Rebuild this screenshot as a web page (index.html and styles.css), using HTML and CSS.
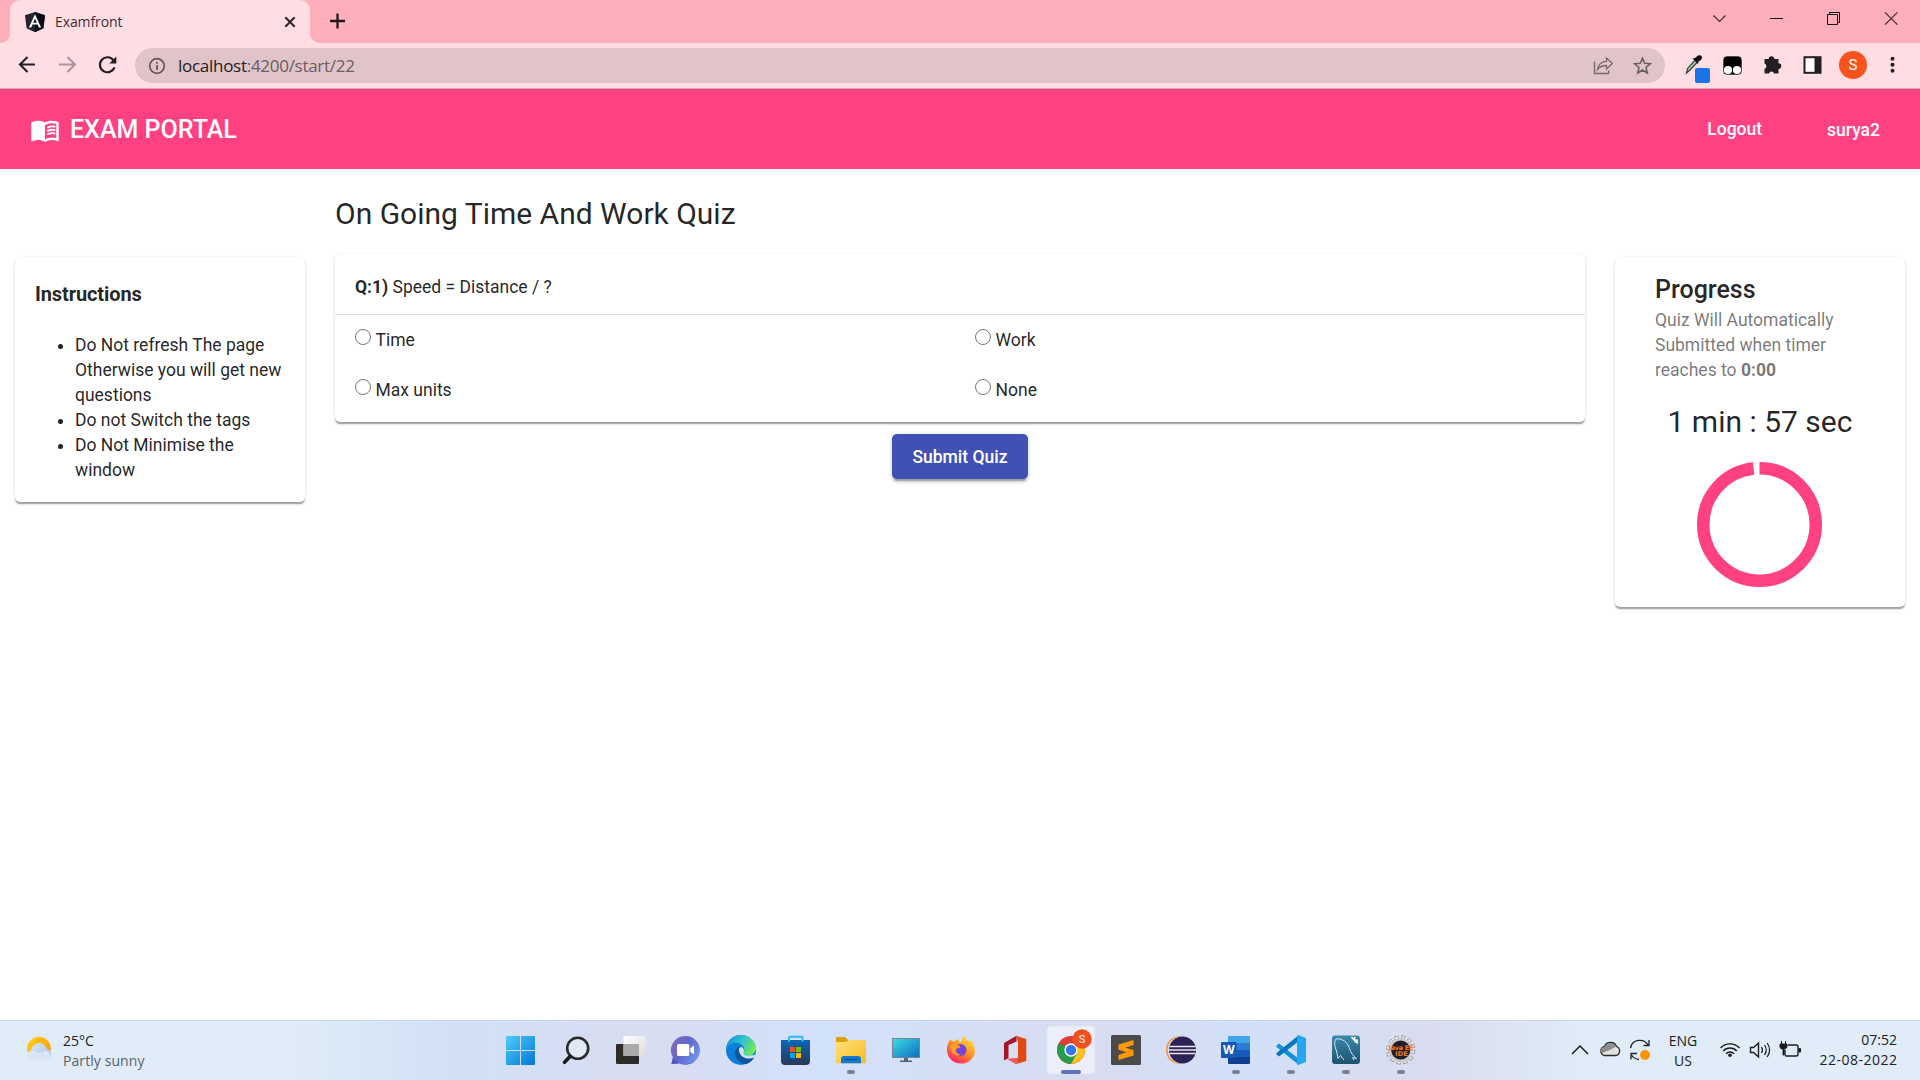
FILE: index.html
```html
<!DOCTYPE html>
<html lang="en">
<head>
<meta charset="utf-8">
<title>Examfront</title>
<link rel="stylesheet" href="styles.css">
</head>
<body>
<div class="screen">
  <div class="tabstrip">
    <span class="tab-foot tab-foot-left"></span>
    <div class="tab">
      <svg class="favicon" width="20" height="20" viewBox="0 0 20 20"><path d="M10 0 20 3.2 18.4 16.2 10 20.2 1.6 16.2 0 3.2Z" fill="#23242f"/><path d="M10 0 20 3.2 18.4 16.2 10 20.2Z" fill="#090b17"/><path d="M10 2.2 3.9 15.6H6.2L7.4 12.6H12.6L13.8 15.6H16.1ZM10 6.5 11.8 10.8H8.2Z" fill="#fff"/></svg>
      <span class="tab-title">Examfront</span>
      <svg class="tab-close" width="12" height="12" viewBox="0 0 12 12"><path d="M1.3 1.3 10.7 10.7M10.7 1.3 1.3 10.7" stroke="#2a2326" stroke-width="2"/></svg>
    </div>
    <span class="tab-foot tab-foot-right"></span>
    <svg class="tab-new" width="16" height="16" viewBox="0 0 16 16"><path d="M8.500 .5V15.500M1 8H16" stroke="#20191c" stroke-width="2.300"/></svg>
    <div class="window-buttons">
      <svg width="57" height="37" viewBox="0 0 57 37"><path d="M21.500 15.500 27.500 21.500 33.500 15.500" fill="none" stroke="#40282d" stroke-width="1.200"/></svg>
      <svg width="57" height="37" viewBox="0 0 57 37"><path d="M21 18.500H34" stroke="#111"/></svg>
      <svg width="57" height="37" viewBox="0 0 57 37"><path d="M21.500 14.500H31.500V24.500H21.500ZM23.500 14V12.500H33.500V22.500H32" fill="none" stroke="#111"/></svg>
      <svg width="57" height="37" viewBox="0 0 57 37"><path d="M22 12.300 34.400 24.700M34.400 12.300 22 24.700" stroke="#40282d" stroke-width="1.200"/></svg>
    </div>
  </div>

  <div class="toolbar">
    <svg width="40" height="44" viewBox="0 0 40 44"><path d="M28 21.500H13.500M20.500 14 13 21.500 20.500 29" fill="none" stroke="#221d20" stroke-width="2.100"/></svg>
    <svg width="40" height="44" viewBox="0 0 40 44"><path d="M12 21.500H28M20.500 14 28 21.500 20.500 29" fill="none" stroke="#ab9499" stroke-width="2"/></svg>
    <svg width="40" height="44" viewBox="0 0 40 44"><path d="M26.500 17.300A7.500 7.500 0 1 0 27.500 24.300" fill="none" stroke="#221d20" stroke-width="2.200"/><path d="M29.300 13.500V20.500H22.300Z" fill="#221d20"/></svg>
    <div class="omnibox">
      <svg width="18" height="18" viewBox="0 0 18 18"><circle cx="9" cy="9" r="7.300" fill="none" stroke="#65585c" stroke-width="1.700"/><path d="M9 8V13M9 5V6.800" stroke="#65585c" stroke-width="1.800"/></svg>
      <span class="url"><span class="url-host">localhost</span>:4200/start/22</span>
      <svg width="40" height="35" viewBox="0 0 40 35"><path d="M12.500 13.500V25.500H26.500V22.500" fill="none" stroke="#766a6d" stroke-width="1.400"/><path d="M15.500 21.500C16.500 16 20 13.300 24.500 13.300V10L30.300 15.500 24.500 21V17.500C20.500 17.500 18 18.500 15.500 21.500Z" fill="none" stroke="#766a6d" stroke-width="1.300"/></svg>
      <svg width="40" height="35" viewBox="0 0 40 35"><path d="M20.500 10.200 22.700 15.300 28.300 15.800 24 19.500 25.300 25 20.500 22 15.700 25 17 19.500 12.700 15.800 18.300 15.300Z" fill="none" stroke="#6b6063" stroke-width="1.600"/></svg>
    </div>
    <div class="extensions">
      <svg width="40" height="44" viewBox="0 0 40 44"><path d="M14.500 30 15.500 25.500 23 17 25.500 19 18 27Z" fill="#a8c7ad" stroke="#31473a" stroke-width="1.200"/><path d="M20.500 15.500 23 15 26 12.500Q28.500 11.500 29.800 13.500 30.500 15 29 17L26.500 18.500 26 21Z" fill="#170d12"/><rect x="23" y="25" width="15" height="15" rx="2" fill="#1a73e8"/></svg>
      <svg width="40" height="44" viewBox="0 0 40 44"><rect x="11" y="13" width="19" height="19" rx="4" fill="#000" stroke="#fff" stroke-width=".6"/><circle cx="16" cy="27" r="4.100" fill="#fff"/><circle cx="25" cy="27" r="4.100" fill="#fff"/></svg>
      <svg width="40" height="44" viewBox="0 0 40 44"><path d="M12.500 16H16.700A2.800 2.800 0 1 1 22.300 16H26.500V20.300A2.800 2.800 0 1 1 26.500 25.900V30.500H22A2.600 2.600 0 0 0 17 30.500H12.500V25.800A2.800 2.800 0 0 0 12.500 20.500Z" fill="#221e22"/></svg>
      <svg width="40" height="44" viewBox="0 0 40 44"><rect x="12.500" y="14.200" width="16" height="15.600" fill="#fff" stroke="#221e22" stroke-width="2"/><path d="M22.500 14H28.500V30H22.500Z" fill="#221e22"/></svg>
      <span class="avatar">S</span>
      <svg width="40" height="44" viewBox="0 0 40 44"><g fill="#221e22"><circle cx="20.500" cy="15.700" r="2"/><circle cx="20.500" cy="21.700" r="2"/><circle cx="20.500" cy="27.700" r="2"/></g></svg>
    </div>
  </div>

  <header class="app-bar">
    <svg class="brand-icon" width="30" height="30" viewBox="0 0 24 24"><path fill="#fff" d="M21 5c-1.110-.35-2.330-.5-3.500-.5-1.950 0-4.050.4-5.500 1.500-1.450-1.100-3.550-1.500-5.500-1.500S2.450 4.900 1 6v14.650c0 .25.25.5.5.5.1 0 .15-.05.25-.05C3.100 20.450 5.050 20 6.500 20c1.950 0 4.050.4 5.500 1.500 1.350-.85 3.800-1.500 5.500-1.500 1.650 0 3.350.3 4.750 1.050.1.050.15.050.25.050.25 0 .5-.25.5-.5V6c-.6-.45-1.250-.75-2-1zm0 13.500c-1.100-.35-2.300-.5-3.500-.5-1.700 0-4.150.65-5.500 1.500V8c1.350-.85 3.800-1.500 5.500-1.500 1.200 0 2.400.15 3.500.5v11.500z"/><path d="M13.700 10.200Q17 8.600 20.300 9.400M13.700 12.900Q17 11.300 20.300 12.100M13.700 15.600Q17 14 20.300 14.800" fill="none" stroke="#fff" stroke-width="1.500"/></svg>
    <h1 class="brand">EXAM PORTAL</h1>
    <nav class="app-nav"><a class="logout">Logout</a><a class="user">surya2</a></nav>
  </header>

  <main class="quiz">
    <aside class="card instructions">
      <h3 class="instructions-title">Instructions</h3>
      <ul class="rules">
        <li>Do Not refresh The page Otherwise you will get new questions</li>
        <li>Do not Switch the tags</li>
        <li>Do Not Minimise the window</li>
      </ul>
    </aside>
    <section class="questions">
      <h2 class="quiz-title">On Going Time And Work Quiz</h2>
      <div class="card question">
        <p class="question-text"><b>Q:1)</b> Speed = Distance / ?</p>
        <div class="options">
          <label class="option"><input class="radio" type="radio" name="q1">Time</label>
          <label class="option"><input class="radio" type="radio" name="q1">Work</label>
          <label class="option"><input class="radio" type="radio" name="q1">Max units</label>
          <label class="option"><input class="radio" type="radio" name="q1">None</label>
        </div>
      </div>
      <button class="submit">Submit Quiz</button>
    </section>
    <aside class="card progress">
      <h3 class="progress-title">Progress</h3>
      <p class="progress-note">Quiz Will Automatically<br>Submitted when timer<br>reaches to <b>0:00</b></p>
      <p class="timer">1 min : 57 sec</p>
      <svg class="spinner" width="125" height="125" viewBox="0 0 125 125"><circle cx="62.500" cy="62.500" r="56.250" fill="none" stroke="#ff4081" stroke-width="12.500" pathLength="1000" stroke-dasharray="983 17" transform="rotate(-90 62.500 62.500)"/></svg>
    </aside>
  </main>

  <footer class="taskbar">
    <div class="weather">
      <svg width="30" height="26" viewBox="0 0 30 26"><defs><linearGradient id="sun" x1="0" y1="0" x2="1" y2="1"><stop offset="0" stop-color="#ffd21c"/><stop offset="1" stop-color="#f58f05"/></linearGradient><linearGradient id="cloud" x1="0" y1="0" x2="1" y2="1"><stop offset="0" stop-color="#dfe8f8"/><stop offset="1" stop-color="#a9bfe6"/></linearGradient></defs><circle cx="13" cy="12.500" r="11.800" fill="url(#sun)"/><path d="M6 22A5 5 0 0 1 5 14.200 8.200 8.200 0 0 1 21 13 5 5 0 0 1 23 22Z" fill="url(#cloud)"/><path d="M5.500 24A4.900 4.900 0 0 1 5.500 14.400Q9.500 14.200 12 17 16 17.500 18.500 15A5.300 5.300 0 0 1 23 24Z" fill="#dce5f4"/></svg>
      <div class="weather-text"><span class="temp">25°C</span><span class="sky">Partly sunny</span></div>
    </div>
    <div class="apps">
      <svg width="55" height="60" viewBox="0 0 55 60"><defs><linearGradient id="win" gradientUnits="userSpaceOnUse" x1="13" y1="16" x2="42" y2="45"><stop offset="0" stop-color="#4dcbfd"/><stop offset="1" stop-color="#0477d4"/></linearGradient></defs><path d="M14 16H27V30H13V17A1 1 0 0 1 14 16ZM28 16H41A1 1 0 0 1 42 17V30H28ZM13 31H27V45H14A1 1 0 0 1 13 44ZM28 31H42V44A1 1 0 0 1 41 45H28Z" fill="url(#win)"/></svg>
      <svg width="55" height="60" viewBox="0 0 55 60"><circle cx="29.700" cy="28.300" r="10.500" fill="#e2e9f6" stroke="#2b2b2d" stroke-width="2.600"/><path d="M22 36.500 16.500 42.300" stroke="#1b1b1d" stroke-width="3.600" stroke-linecap="round"/></svg>
      <svg width="55" height="60" viewBox="0 0 55 60"><defs><linearGradient id="tvw" x1="0" y1="0" x2="1" y2="1"><stop offset="0" stop-color="#fff"/><stop offset="1" stop-color="#dcdcdc"/></linearGradient></defs><rect x="13" y="24" width="23" height="20" rx="1" fill="#2c2c2b"/><rect x="20.500" y="16" width="22" height="20" rx="1" fill="url(#tvw)"/><path d="M20.500 24H36V36H20.500Z" fill="#a9aaaa"/></svg>
      <svg width="55" height="60" viewBox="0 0 55 60"><defs><linearGradient id="chat" x1="0" y1="0" x2="1" y2=".6"><stop offset="0" stop-color="#8b66b4"/><stop offset=".55" stop-color="#6169cd"/><stop offset="1" stop-color="#6f92ee"/></linearGradient></defs><path d="M27.700 16A14.200 14.200 0 1 1 22 43.200L13.500 44 15 37.500A14.200 14.200 0 0 1 27.700 16Z" fill="url(#chat)"/><path d="M15 37A14.200 14.200 0 0 0 41 35C39 42 31 45.500 22 43.200L13.500 44Z" fill="#5055c2"/><rect x="19" y="24" width="12.300" height="12" rx="1.500" fill="#fff"/><path d="M32.300 28.300 36 25.500V34.500L32.300 31.800Z" fill="#fff"/></svg>
      <svg width="55" height="60" viewBox="0 0 55 60"><defs><linearGradient id="edgeTop" x1="0" y1=".2" x2="1" y2=".6"><stop offset="0" stop-color="#168fd9"/><stop offset=".5" stop-color="#31c2cf"/><stop offset="1" stop-color="#70ed52"/></linearGradient></defs><circle cx="28" cy="30" r="15" fill="#0c7fd9"/><path d="M13 29C14 20 20 15 28 15 36 15 43 21 43 28 43 33 39 35.500 35 35.500 31.500 35.500 30.500 33.800 30.500 33 32 31 31.600 27 28.500 24.500 24 21 16 22.500 13 29Z" fill="url(#edgeTop)"/><path d="M28.500 26.500C23 26.500 21.500 31 22.300 35 23.500 40 28 44.500 33.500 44 37 42.500 40 40 41 37.500 35 40 27.500 37.500 26.500 31.500 26.200 29.500 27 27.500 28.500 26.500Z" fill="#12559f"/><path d="M28 27A3 3 0 0 0 26 31C27 37 34 40.500 41 37.400L43 39V35L35 35.500C31 35.500 30.500 33.500 30.500 33 32 31 30.500 27.500 28 27Z" fill="#d3e0f5"/></svg>
      <svg width="55" height="60" viewBox="0 0 55 60"><defs><linearGradient id="store" x1="0" y1="0" x2="0" y2="1"><stop offset="0" stop-color="#0b67b5"/><stop offset="1" stop-color="#293858"/></linearGradient></defs><path d="M21 22V17.500Q21 16.800 22 16.800H33Q34.500 16.800 34.500 17.500V22" fill="none" stroke="#28b8f5" stroke-width="1.900"/><path d="M13 20H42V41Q42 45 38 45H17Q13 45 13 41Z" fill="url(#store)"/><path d="M21 20V22M34.500 20V22" stroke="#28b8f5" stroke-width="1.900"/><path d="M22 27H27V32H22Z" fill="#f25022"/><path d="M28 27H33V32H28Z" fill="#7fba00"/><path d="M22 33H27V38H22Z" fill="#00a4ef"/><path d="M28 33H33V38H28Z" fill="#ffb900"/></svg>
      <svg width="55" height="60" viewBox="0 0 55 60"><defs><linearGradient id="folder" x1="0" y1="0" x2="1" y2="1"><stop offset="0" stop-color="#ffe07a"/><stop offset="1" stop-color="#f9bd23"/></linearGradient></defs><path d="M13 18Q13 17 14 17H22L25 20H42Q43 20 43 21V30H13Z" fill="#dfa00a"/><path d="M13 22H22L26 20H42Q43 20 43 21V43.300H13Z" fill="url(#folder)"/><path d="M18 43.300V39Q18 36 21 36H35Q38 36 38 39V43.300Z" fill="#1378cf"/><path d="M21.500 39.500H34.500" stroke="#0b4d90" stroke-width="1.200"/><rect x="24" y="50" width="8" height="4" rx="2" fill="#7d828e"/></svg>
      <svg width="55" height="60" viewBox="0 0 55 60"><defs><linearGradient id="pc" x1="0" y1="0" x2="1" y2="1"><stop offset="0" stop-color="#3ddce3"/><stop offset="1" stop-color="#0d6dc0"/></linearGradient></defs><path d="M26 37H30V41H26ZM22 40.500H34V42H22Z" fill="#59626c"/><rect x="14.500" y="18.500" width="27" height="19" fill="url(#pc)" stroke="#77838e"/></svg>
      <svg width="55" height="60" viewBox="0 0 55 60"><defs><linearGradient id="fox" x1=".9" y1="0" x2=".2" y2="1"><stop offset="0" stop-color="#fff04f"/><stop offset=".45" stop-color="#ff9a24"/><stop offset="1" stop-color="#ff1666"/></linearGradient></defs><path d="M17.500 19C18 21 19.500 21.500 21 21.500 22.500 20 24 19.500 25.500 19 25.500 20.500 26 21.500 28 22.500 29 20 29.500 17 31 15.500 32.500 19 35 20 36.500 22.500L37.500 19.500C44 27 43 36.500 36.500 41 31 45 22 44.500 17.500 39 12.500 33 13 25 17.500 19Z" fill="url(#fox)"/><circle cx="27.500" cy="30" r="6" fill="#7543dc"/><path d="M17 25C20 23 24 24 27 26.200 27.500 28 24.500 28 23 29.200 22.500 33 25.500 35 28.500 34 25 37.500 17 35 17 25Z" fill="#ff9d23"/></svg>
      <svg width="55" height="60" viewBox="0 0 55 60"><path d="M16 23 28.500 15.700V21.500L20.500 25V38L16 40.500Z" fill="#a61528"/><path d="M28 15.700 38.300 19V41L28 44 19.500 39 29.500 38V21Z" fill="#e14a12"/><path d="M19.500 39 29.500 38V44H28Z" fill="#f45c60"/><path d="M21 25 30 21.500V38H21Z" fill="#d9dff3"/></svg>
      <svg width="55" height="60" viewBox="0 0 55 60"><rect x="4" y="6" width="48" height="48" rx="4" fill="#eceef9" stroke="#e0e3f0" stroke-width=".7"/><circle cx="28" cy="30" r="14" fill="#dc3f35"/><path d="M28 30 15.900 23A14 14 0 0 0 28 44L34 33.500Z" fill="#279c4c"/><path d="M28 24H40.600A14 14 0 0 1 28 44L34 33.500Z" fill="#fcc31c"/><circle cx="28" cy="30" r="6.700" fill="#fff"/><circle cx="28" cy="30" r="5.200" fill="#3279e8"/><circle cx="39" cy="19" r="9.700" fill="#f2501e"/><text class="badge-letter" x="39" y="23" text-anchor="middle">S</text><rect x="18" y="50" width="20" height="4" rx="2" fill="#6272bd"/></svg>
      <svg width="55" height="60" viewBox="0 0 55 60"><rect x="13" y="15" width="30" height="30" rx="1.500" fill="#4b4b4b"/><path d="M20.500 24.500 35.500 20V25L27.500 27.700 35.500 30V35.500L20.500 40V35L28.500 32.200 20.500 29.800Z" fill="#ff9800"/></svg>
      <svg width="55" height="60" viewBox="0 0 55 60"><ellipse cx="26" cy="30" rx="13" ry="13.800" fill="#f7942a"/><circle cx="28.200" cy="30" r="13.600" fill="#d8def2"/><circle cx="29.500" cy="30" r="13.500" fill="#2c2255"/><path d="M16.500 26.500H42.500M16 30H43M16.500 33.500H42.500" stroke="#e9e7f1" stroke-width="1.700"/></svg>
      <svg width="55" height="60" viewBox="0 0 55 60"><path d="M20 17Q20 16 21 16H41Q42 16 42 17V23H20Z" fill="#41a5ee"/><path d="M20 23H42V30H20Z" fill="#2b7cd3"/><path d="M20 30H42V37H20Z" fill="#185abd"/><path d="M20 37H42V43Q42 44 41 44H21Q20 44 20 43Z" fill="#103f91"/><rect x="13" y="22" width="15.500" height="16" rx="1" fill="#1756b7"/><text class="word-letter" x="20.700" y="34.200" text-anchor="middle">W</text><rect x="24" y="50" width="8" height="4" rx="2" fill="#7d828e"/></svg>
      <svg width="55" height="60" viewBox="0 0 55 60"><path d="M13.500 25.500 16 23.500 36 39V45L13.500 27Z" fill="#1591d7"/><path d="M13.500 34.500 16 36.500 36 21V15L13.500 33Z" fill="#0878bd"/><path d="M35 15 43 18V42L35 45 34 44.500V15.500Z" fill="#25a6f3"/><rect x="24" y="50" width="8" height="4" rx="2" fill="#7d828e"/></svg>
      <svg width="55" height="60" viewBox="0 0 55 60"><defs><linearGradient id="sql" x1="0" y1="0" x2="0" y2="1"><stop offset="0" stop-color="#3b8ab1"/><stop offset="1" stop-color="#1c526d"/></linearGradient></defs><rect x="14" y="15.500" width="28" height="28.500" rx="3" fill="url(#sql)"/><path d="M20 38.500 18.500 31C16.500 26 16 21 18 19 23 18 28 21 30.500 26 32.500 30 32 33 38.500 38.500L34.500 37.500 36 40M20 38.500 22.500 35.500 26 40" fill="none" stroke="#d6e8f0" stroke-width="1"/><path d="M33.500 17 38 22 40 23M37 17 36.500 20 40 20.500" stroke="#fff" stroke-width="1.800"/><rect x="24" y="50" width="8" height="4" rx="2" fill="#7d828e"/></svg>
      <svg width="55" height="60" viewBox="0 0 55 60"><circle cx="27.700" cy="30" r="12.700" fill="none" stroke="#777" stroke-width="3.600" stroke-dasharray="4 2.650"/><circle cx="27.700" cy="30" r="12.700" fill="none" stroke="#e0e0dc" stroke-width="2.500" stroke-dasharray="3.400 3.250" stroke-dashoffset="-.3"/><circle cx="27.700" cy="30" r="10.500" fill="#221d2a" stroke="#c9c9c6" stroke-width="2"/><text class="java-letter" x="28" y="29.500" text-anchor="middle" textLength="25">Java EE</text><text class="java-letter" x="28.500" y="35.800" text-anchor="middle">IDE</text><rect x="24" y="50" width="8" height="4" rx="2" fill="#7d828e"/></svg>
    </div>
    <div class="tray">
      <svg width="90" height="60" viewBox="0 0 90 60"><path d="M6 34 14 26 22 34" fill="none" stroke="#1c1c1e" stroke-width="1.500"/><path d="M38 35.500A4.700 4.700 0 0 1 38.500 26.500Q40 22.500 44.500 22.500 49 22.500 50.500 26.500A4.700 4.700 0 0 1 50 35.500Z" fill="#e2e2e2" stroke="#28292b" stroke-width="1.300"/><path d="M36.500 33Q41 31 44 30L50 26.500Q48 22.500 44 23 40 23 38.500 27 34.500 27.500 34.500 31Z" fill="#8d8e8f"/><path d="M64.500 28A9.500 9.500 0 0 1 82 25M83 20V25.500H77.500M73 39.500A10 10 0 0 1 65.500 35M65 39.500V33.500H71" fill="none" stroke="#222325" stroke-width="1.300"/><circle cx="79" cy="35" r="5" fill="#ff9500"/></svg>
      <div class="language"><span>ENG</span><span>US</span></div>
      <svg width="84" height="60" viewBox="0 0 84 60"><g fill="none" stroke="#1c1c1e" stroke-width="1.400"><path d="M2.500 28A13 13 0 0 1 21.500 28M5.200 31A9.300 9.300 0 0 1 18.800 31M8 33.800A5.500 5.500 0 0 1 16 33.800"/><path d="M32.500 27.500H35.500L40.500 23V37L35.500 32.500H32.500Z"/><path d="M43.500 27Q45.500 30 43.500 33M46.500 25Q50 30 46.500 35M49.200 23Q54 30 49.200 37" stroke-width="1.200"/><path d="M70 25H78Q80 25 80 27V34Q80 36 78 36H68Q67 36 67 34V30"/></g><circle cx="12" cy="35.200" r="1.800" fill="#1c1c1e"/><path d="M62 24H69V27Q68 29 66 29V35H65V29Q62 29 62 27ZM63.500 21V25M67.500 21V25" fill="#1c1c1e" stroke="#1c1c1e"/><path d="M81 28.500H82.500V32H81Z" fill="#1c1c1e" stroke="#1c1c1e"/></svg>
      <div class="clock"><span>07:52</span><span class="date">22-08-2022</span></div>
    </div>
  </footer>
</div>
</body>
</html>
```

FILE: styles.css
```css
* { box-sizing: border-box; }
body { margin: 0; background: #fff; font-family: Roboto, "Liberation Sans", sans-serif; color: rgba(0, 0, 0, .87); }
h1, h2, h3, p, ul { margin: 0; }
svg { display: block; flex: none; }
.screen { width: 1920px; height: 1080px; display: flex; flex-direction: column; overflow: hidden; }

.tabstrip { height: 43px; background: #ffaebb; display: flex; flex: none; font-family: "Open Sans", "Noto Sans", sans-serif; }
.tab { width: 300px; height: 43px; padding: 0 14px 0 15px; display: flex; align-items: center; background: #ffdee3; border-radius: 10px 10px 0 0; }
.tab-foot { width: 10px; height: 10px; margin-top: 33px; }
.tab-foot-left { background: radial-gradient(circle at 0 0, #ffaebb 9.500px, #ffdee3 10.500px); }
.tab-foot-right { background: radial-gradient(circle at 100% 0, #ffaebb 9.500px, #ffdee3 10.500px); }
.tab-title { margin-left: 10px; flex: 1; font-size: 14px; letter-spacing: -.1px; color: #3c2f33; }
.tab-new { margin: 13px 0 0 9px; }
.window-buttons { margin-left: auto; display: flex; }

.toolbar { height: 46px; flex: none; display: flex; padding-left: 7px; background: #ffdee3; border-bottom: 1px solid #c3abb1; font-family: "Open Sans", "Noto Sans", sans-serif; }
.omnibox { width: 1530px; height: 35px; margin: 5px 0 0 8px; padding: 0 3px 0 13px; border-radius: 18px; background: #e0c4c9; display: flex; align-items: center; }
.url { margin-left: 12px; flex: 1; font-size: 17px; letter-spacing: -.28px; color: #6b5c61; }
.url-host { color: #241d20; }
.extensions { display: flex; margin-left: 7px; }
.avatar { width: 28px; height: 28px; margin: 8px 5px 0 7px; border-radius: 50%; background: #f8531c; color: #fff; font: 15px/28px Roboto, sans-serif; text-align: center; }

.app-bar { height: 80px; flex: none; display: flex; align-items: center; padding: 0 40px 0 30px; background: #ff4081; color: #fff; }
.brand-icon { margin-top: 1px; }
.brand { margin: 2px 0 0 10px; font-size: 25px; font-weight: 500; line-height: 40px; }
.app-nav { margin-left: auto; display: flex; gap: 65px; font-size: 17.5px; line-height: 22px; font-weight: 500; }
.user { padding-top: 1px; }

.quiz { flex: 1; display: grid; grid-template-columns: 290px 1250px 290px; column-gap: 30px; padding: 0 15px; align-items: start; }
.card { background: #fff; border-radius: 5px; box-shadow: 0 2.500px 1.250px -1.250px rgba(0, 0, 0, .2), 0 1.250px 1.250px 0 rgba(0, 0, 0, .14), 0 1.250px 3.750px 0 rgba(0, 0, 0, .12); }
.instructions { height: 245px; margin-top: 88px; padding: 24px 20px 0; }
.instructions-title { font-size: 20px; line-height: 27px; font-weight: 700; letter-spacing: -.1px; }
.rules { margin-top: 25px; padding-left: 40px; font-size: 17.5px; line-height: 25px; }
.quiz-title { margin-top: 25px; font-size: 30px; line-height: 40px; font-weight: 400; }
.question { height: 168px; margin-top: 20px; }
.question-text { height: 61px; padding: 20px 20px 0; border-bottom: 1px solid #dedede; font-size: 17.5px; line-height: 27px; }
.options { display: grid; grid-template-columns: 620px 1fr; grid-auto-rows: 50px; padding-left: 19.500px; }
.option { display: flex; height: 50px; font-size: 17.5px; line-height: 50px; }
.radio { width: 16px; height: 16px; margin: 14px 5px 0 0; }
.submit { display: block; width: 136px; height: 45px; margin: 12px auto 0; border: 0; border-radius: 5px; background: #3f51b5; color: #fff; font: 500 17.5px/45px Roboto, sans-serif; padding: 1px 0 0; box-shadow: 0 3.750px 1.250px -2.500px rgba(0, 0, 0, .2), 0 2.500px 2.500px 0 rgba(0, 0, 0, .14), 0 1.250px 6.250px 0 rgba(0, 0, 0, .12); }
.progress { height: 350px; margin-top: 88px; padding: 20px 20px 0; }
.progress-title { padding-left: 20px; font-size: 25px; line-height: 26px; font-weight: 500; }
.progress-note { margin-top: 5px; padding-left: 20px; font-size: 17.5px; line-height: 25px; color: rgba(0, 0, 0, .54); }
.timer { margin-top: 19px; font-size: 30px; line-height: 40px; text-align: center; }
.spinner { margin: 20px 0 0 62px; }

.taskbar { height: 60px; flex: none; display: flex; border-top: 1px solid #cbd7e6; background: linear-gradient(90deg, #e0ecf7 0, #dfebf7 300px, #d2e1f7 450px, #d8dcf0 660px, #d2e2fa 820px, #d8dcf0 1090px, #d2e0f8 1250px, #d9dcef 1420px, #e0ecf8 1590px, #e0ecf8 100%); font-family: "Open Sans", "Noto Sans", sans-serif; font-size: 14px; line-height: 20px; color: #202124; }
.taskbar > * { margin-top: -1px; }
.weather { width: 493px; display: flex; padding-left: 26px; }
.weather > svg { margin-top: 16px; }
.weather-text { display: flex; flex-direction: column; margin: 11px 0 0 7px; }
.sky { color: #5b6167; letter-spacing: .08px; }
.apps { display: flex; }
.tray { margin-left: auto; display: flex; padding-right: 23px; }
.language { width: 50px; margin: 11px 10px 0 2px; display: flex; flex-direction: column; text-align: center; }
.clock { width: 95px; margin-top: 10px; display: flex; flex-direction: column; text-align: right; white-space: nowrap; }
.date { letter-spacing: .5px; margin-right: -.5px; }
.badge-letter { font: 11px Roboto, sans-serif; fill: #fff; }
.word-letter { font: bold 12px "Open Sans", sans-serif; fill: #fff; }
.java-letter { font: bold 6.500px "DejaVu Sans", sans-serif; fill: #f08020; }
```
